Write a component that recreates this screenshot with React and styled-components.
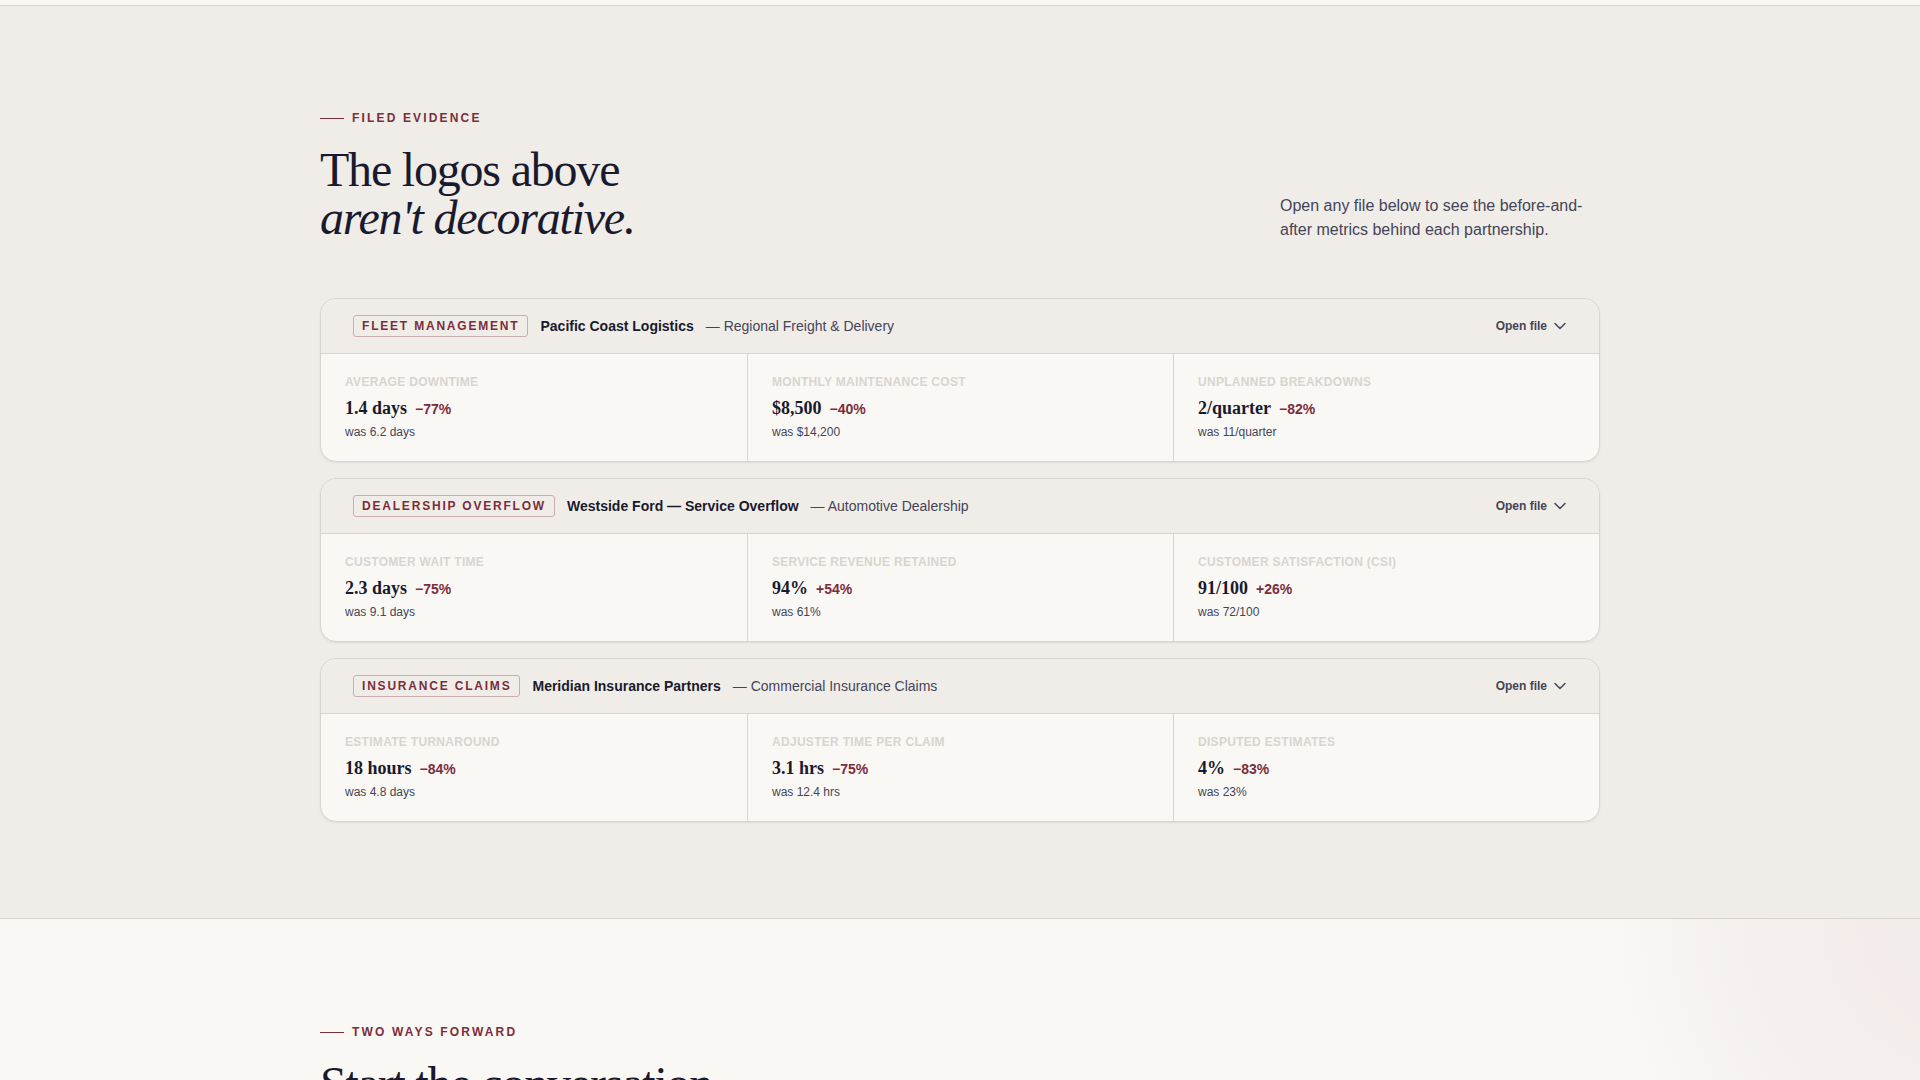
import React from "react";
import styled, { createGlobalStyle } from "styled-components";

const Global = createGlobalStyle`
  html, body { margin: 0; padding: 0; background: #f0ede8; }
  * { box-sizing: border-box; }
`;

const serif = `"Liberation Serif", "Times New Roman", serif`;
const sans = `"Liberation Sans", Arial, sans-serif`;

const Page = styled.div`
  height: 100vh;
  overflow: hidden;
  font-family: ${sans};
  color: #1a1a2e;
`;

const TopStrip = styled.div`
  height: 6px;
  background: #faf8f5;
  border-bottom: 1px solid #d8d5cf;
`;

const EvidenceSection = styled.section`
  background: #f0ede8;
  border-bottom: 1px solid #d8d5cf;
  padding: 104px 320px 96px;
`;

const ForwardSection = styled.section`
  position: relative;
  overflow: hidden;
  background: #faf8f5;
  padding: 105px 320px 96px;
  &::before {
    content: "";
    position: absolute;
    top: -370px;
    right: -430px;
    width: 740px;
    height: 740px;
    background: radial-gradient(
      circle closest-side,
      rgba(123, 45, 59, 0.062) 0%,
      rgba(123, 45, 59, 0.055) 35%,
      rgba(123, 45, 59, 0.032) 75%,
      rgba(123, 45, 59, 0) 100%
    );
    pointer-events: none;
  }
`;

const Eyebrow = styled.div`
  display: flex;
  align-items: center;
  gap: 8px;
  font-size: 12px;
  line-height: 16px;
  font-weight: 700;
  letter-spacing: 0.18em;
  text-transform: uppercase;
  color: #7b2d3b;
  &::before {
    content: "";
    width: 24px;
    height: 1px;
    background: #7b2d3b;
  }
`;

const HeadRow = styled.div`
  display: flex;
  justify-content: space-between;
  align-items: flex-end;
  margin-top: 20px;
  margin-bottom: 56px;
`;

const Title = styled.h2`
  margin: 0;
  font-family: ${serif};
  font-weight: 400;
  font-size: 48px;
  line-height: 48px;
  letter-spacing: -0.025em;
  color: #1a1a2e;
  em { font-style: italic; }
`;

const Lede = styled.p`
  margin: 0;
  width: 320px;
  font-size: 16px;
  line-height: 24px;
  color: #444458;
`;

const Stack = styled.div`
  display: flex;
  flex-direction: column;
  gap: 16px;
`;

const Card = styled.article`
  border: 1px solid #d8d5cf;
  border-radius: 16px;
  overflow: hidden;
  background: #faf8f5;
  box-shadow: 0 1px 2px rgba(26, 26, 46, 0.08);
`;

const CardHead = styled.header`
  display: flex;
  align-items: center;
  height: 55px;
  padding: 0 32px;
  background: #f0ede8;
  border-bottom: 1px solid #d8d5cf;
`;

const Tag = styled.span`
  padding: 3px 8px;
  border: 1px solid #c9aeb0;
  border-radius: 3px;
  font-size: 12px;
  line-height: 14px;
  font-weight: 700;
  letter-spacing: 0.15em;
  color: #7b2d3b;
  margin-right: 12px;
`;

const Client = styled.span`
  font-size: 14px;
  font-weight: 700;
  color: #1a1a2e;
  margin-right: 12px;
`;

const Sector = styled.span`
  font-size: 14px;
  color: #444458;
`;

const OpenFile = styled.span`
  margin-left: auto;
  display: flex;
  align-items: center;
  gap: 6px;
  font-size: 12px;
  font-weight: 700;
  color: #444458;
  svg { display: block; }
`;

const Metrics = styled.div`
  display: grid;
  grid-template-columns: repeat(3, 1fr);
`;

const Metric = styled.div`
  padding: 21px 24px 20px;
  height: 107px;
  & + & { border-left: 1px solid #d8d5cf; }
`;

const MetricLabel = styled.div`
  font-size: 12px;
  line-height: 14px;
  font-weight: 700;
  letter-spacing: 0.025em;
  color: #d8d5cf;
  text-transform: uppercase;
`;

const MetricValue = styled.div`
  display: flex;
  align-items: baseline;
  gap: 8px;
  margin-top: 6px;
  font-family: ${serif};
  font-weight: 700;
  font-size: 18px;
  line-height: 26px;
  color: #1a1a2e;
`;

const Change = styled.span`
  font-family: ${sans};
  font-size: 14px;
  font-weight: 700;
  color: #7b2d3b;
`;

const Was = styled.div`
  margin-top: 2px;
  font-size: 12px;
  line-height: 16px;
  color: #444458;
`;

const files = [
  {
    tag: "FLEET MANAGEMENT", client: "Pacific Coast Logistics", sector: "— Regional Freight & Delivery",
    metrics: [
      ["Average Downtime", "1.4 days", "−77%", "was 6.2 days"],
      ["Monthly Maintenance Cost", "$8,500", "−40%", "was $14,200"],
      ["Unplanned Breakdowns", "2/quarter", "−82%", "was 11/quarter"],
    ],
  },
  {
    tag: "DEALERSHIP OVERFLOW", client: "Westside Ford — Service Overflow", sector: "— Automotive Dealership",
    metrics: [
      ["Customer Wait Time", "2.3 days", "−75%", "was 9.1 days"],
      ["Service Revenue Retained", "94%", "+54%", "was 61%"],
      ["Customer Satisfaction (CSI)", "91/100", "+26%", "was 72/100"],
    ],
  },
  {
    tag: "INSURANCE CLAIMS", client: "Meridian Insurance Partners", sector: "— Commercial Insurance Claims",
    metrics: [
      ["Estimate Turnaround", "18 hours", "−84%", "was 4.8 days"],
      ["Adjuster Time Per Claim", "3.1 hrs", "−75%", "was 12.4 hrs"],
      ["Disputed Estimates", "4%", "−83%", "was 23%"],
    ],
  },
];

const Chevron = () => (
  <svg width="14" height="14" viewBox="0 0 14 14" fill="none" stroke="#444458" strokeWidth="1.5" strokeLinecap="round" strokeLinejoin="round">
    <path d="M2 4.5 7 9.5 12 4.5" />
  </svg>
);

export default function App() {
  return (
    <Page>
      <Global />
      <TopStrip />
      <EvidenceSection>
        <Eyebrow>Filed Evidence</Eyebrow>
        <HeadRow>
          <Title>The logos above<br /><em>aren't decorative.</em></Title>
          <Lede>Open any file below to see the before-and-after metrics behind each partnership.</Lede>
        </HeadRow>
        <Stack>
          {files.map((f) => (
            <Card key={f.tag}>
              <CardHead>
                <Tag>{f.tag}</Tag>
                <Client>{f.client}</Client>
                <Sector>{f.sector}</Sector>
                <OpenFile>Open file <Chevron /></OpenFile>
              </CardHead>
              <Metrics>
                {f.metrics.map((m) => (
                  <Metric key={m[0]}>
                    <MetricLabel>{m[0]}</MetricLabel>
                    <MetricValue>{m[1]}<Change>{m[2]}</Change></MetricValue>
                    <Was>{m[3]}</Was>
                  </Metric>
                ))}
              </Metrics>
            </Card>
          ))}
        </Stack>
      </EvidenceSection>
      <ForwardSection>
        <Eyebrow>Two Ways Forward</Eyebrow>
        <HeadRow>
          <Title>Start the conversation</Title>
        </HeadRow>
      </ForwardSection>
    </Page>
  );
}
